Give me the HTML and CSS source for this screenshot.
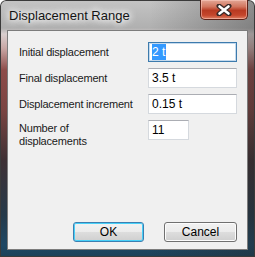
FILE: index.html
```html
<!DOCTYPE html>
<html lang="en">
<head>
    <meta charset="UTF-8">
    <title>Displacement Range</title>
    <link rel="stylesheet" href="styles.css">
</head>
<body>
    <div class="window">
        <div class="titlebar">
            <span class="title">Displacement Range</span>
            <button class="close-btn" aria-label="Close">
                <svg width="16" height="12" viewBox="0 0 16 12">
                    <path d="M3 2 L13 10 M13 2 L3 10" stroke="#3a2a28" stroke-width="5" stroke-linecap="round"/>
                    <path d="M3.5 2.5 L12.5 9.5 M12.5 2.5 L3.5 9.5" stroke="#ffffff" stroke-width="2.6" stroke-linecap="round"/>
                </svg>
            </button>
        </div>
        <div class="client">
            <div class="form">
                <label class="label">Initial displacement</label>
                <div class="field focused"><span class="selected">2 t</span></div>

                <label class="label">Final displacement</label>
                <div class="field">3.5 t</div>

                <label class="label">Displacement increment</label>
                <div class="field">0.15 t</div>

                <label class="label two-line">Number of<br>displacements</label>
                <div class="field short">11</div>
            </div>
            <div class="buttons">
                <button class="btn default">OK</button>
                <button class="btn">Cancel</button>
            </div>
        </div>
    </div>
</body>
</html>
```

FILE: styles.css
```css
html, body {
    margin: 0;
    padding: 0;
}
body {
    width: 255px;
    height: 257px;
    overflow: hidden;
    font-family: "Liberation Sans", Arial, sans-serif;
}
.window {
    width: 255px;
    height: 257px;
    box-sizing: border-box;
    display: flex;
    flex-direction: column;
    padding: 0 7px 7px 7px;
    border-radius: 6px 6px 0 0;
    background:
        linear-gradient(90deg, rgba(255,255,255,0) 0, rgba(255,255,255,0) 150px, rgba(40,40,40,0.35) 255px),
        linear-gradient(180deg, #c4c4c4 0, #b0b0b0 28px, #d9cfcf 34px, #c9a8a6 48px, #8d4c4a 70px, #7a4442 110px, #3e3034 160px, #263a4a 215px, #1f4864 245px, #1c4158 257px);
    box-shadow: inset 0 0 0 1px #3a3a3a;
}
.titlebar {
    height: 30px;
    flex: none;
    display: flex;
    align-items: flex-start;
    justify-content: space-between;
}
.title {
    margin: 9px 0 0 2px;
    font-size: 13px;
    line-height: 14px;
    color: #141414;
    text-shadow: 0 0 6px #fff, 0 0 8px #fff, 0 0 10px #fff;
}
.close-btn {
    width: 48px;
    height: 20px;
    padding: 0;
    border: 1px solid #5e2218;
    border-top: none;
    border-radius: 0 0 5px 5px;
    display: flex;
    align-items: center;
    justify-content: center;
    background: linear-gradient(180deg, #e3a796 0, #d2765f 35%, #b83a22 55%, #c5462c 80%, #dd8064 100%);
    box-shadow: inset 0 0 0 1px rgba(255,210,200,0.5);
}
.client {
    flex: 1;
    display: flex;
    flex-direction: column;
    justify-content: space-between;
    background: #f0f0f0;
    border: 1px solid #7c7c7c;
    padding: 11px 10px 7px 11px;
}
.form {
    display: grid;
    grid-template-columns: 129px 89px;
    grid-auto-rows: 20px;
    row-gap: 6px;
}
.label {
    font-size: 11px;
    letter-spacing: -0.2px;
    color: #1a1a1a;
    line-height: 13px;
    align-self: center;
    white-space: nowrap;
}
.label.two-line {
    align-self: start;
    margin-top: 2px;
}
.field {
    box-sizing: border-box;
    height: 20px;
    border: 1px solid #d5d9de;
    border-top-color: #abadb3;
    background: #fff;
    font-size: 12px;
    line-height: 18px;
    padding-left: 3px;
    color: #000;
}
.field.focused {
    border-color: #3d7bad;
    border-top-color: #3d7bad;
    box-shadow: inset 0 0 0 1px #c5daed;
}
.field.short {
    width: 41px;
}
.selected {
    background: #3399ff;
    color: #fff;
    padding: 1px 1px 1px 0;
}
.buttons {
    display: flex;
    justify-content: flex-end;
    gap: 20px;
}
.btn {
    width: 73px;
    height: 20px;
    padding: 0;
    font-family: "Liberation Sans", Arial, sans-serif;
    font-size: 12px;
    color: #000;
    border: 1px solid #707070;
    border-radius: 3px;
    background: linear-gradient(180deg, #f2f2f2 0, #ebebeb 50%, #dddddd 51%, #cfcfcf 100%);
    box-shadow: inset 0 0 0 1px #fcfcfc;
}
.btn.default {
    width: 71px;
    border-color: #3c7fb1;
    box-shadow: inset 0 0 0 1px #48d0f8;
}
```
